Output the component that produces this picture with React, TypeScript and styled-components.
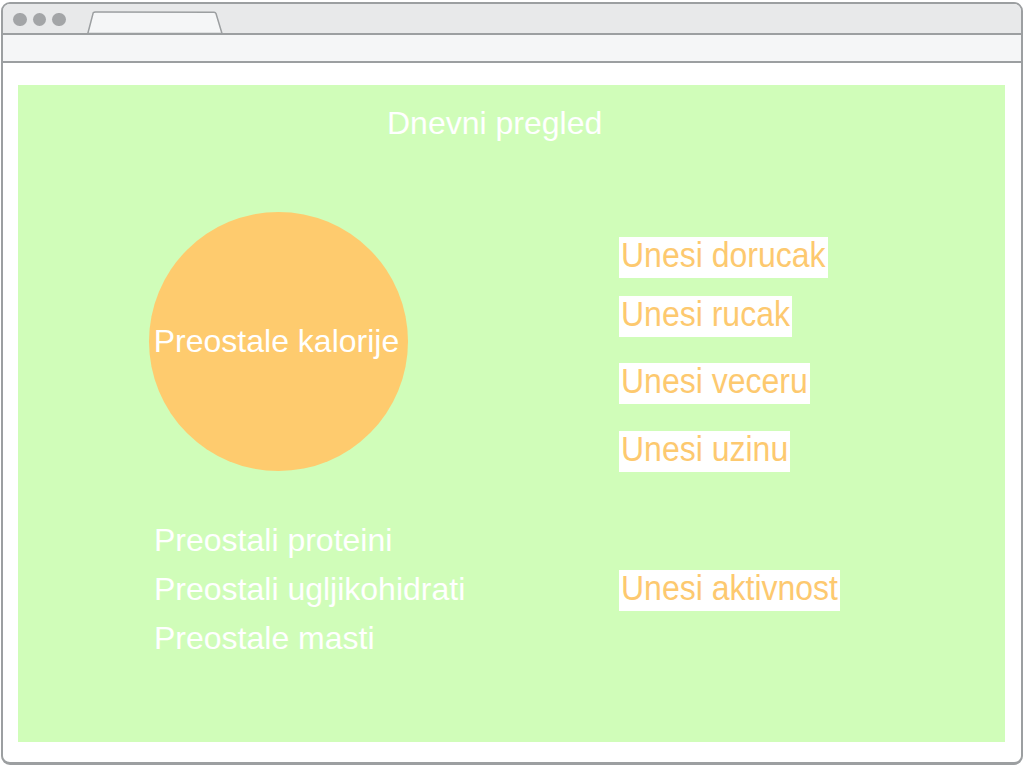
import React from "react";
import styled, { createGlobalStyle } from "styled-components";

const Global = createGlobalStyle`
  html, body { margin: 0; padding: 0; background: #ffffff; }
  body { font-family: "Liberation Sans", Arial, sans-serif; }
  * { box-sizing: border-box; }
`;

const GRAY = "#9c9fa1";
const ORANGE = "#fdc96f";

const Frame = styled.div`
  width: 1022px;
  height: 763px;
  margin: 2px 0 0 1px;
  border: 2px solid ${GRAY};
  border-bottom-width: 3px;
  border-radius: 9px;
  display: flex;
  flex-direction: column;
  overflow: hidden;
  background: #ffffff;
`;

const TitleBar = styled.div`
  height: 31px;
  flex: none;
  background: #e8e9ea;
  border-bottom: 2px solid ${GRAY};
  display: flex;
  align-items: flex-end;
  padding-left: 10px;
`;

const Dots = styled.div`
  display: flex;
  gap: 6px;
  align-self: center;
  margin-top: 2px;
`;

const Dot = styled.span`
  width: 13.5px;
  height: 13.5px;
  border-radius: 50%;
  background: #a3a5a7;
`;

const Tab = styled.svg`
  display: block;
  margin-left: 21px;
  margin-bottom: -1px;
`;

const AddressBar = styled.div`
  height: 28px;
  flex: none;
  background: #f5f6f7;
  border-bottom: 2px solid ${GRAY};
`;

const Content = styled.div`
  flex: 1;
  display: flex;
  padding: 22px 16px 20px 15px;
`;

const Panel = styled.div`
  flex: 1;
  background: #d0fdb9;
  padding-top: 18px;
  color: #ffffff;
  font-size: 32px;
`;

const Title = styled.h1`
  margin: 0 0 0 369px;
  font-size: 32px;
  font-weight: normal;
  line-height: 40px;
  color: #ffffff;
`;

const Main = styled.div`
  display: grid;
  grid-template-columns: 470px 1fr;
  padding-left: 131px;
  margin-top: 69px;
`;

const LeftCol = styled.div`
  display: flex;
  flex-direction: column;
`;

const Circle = styled.div`
  width: 259px;
  height: 259px;
  border-radius: 50%;
  background: #fecb6e;
  display: flex;
  align-items: center;
  justify-content: center;
  white-space: nowrap;
  line-height: 37px;
  padding: 0 4px 0 0;
`;

const Stats = styled.div`
  margin: 45px 0 0 5px;
  display: flex;
  flex-direction: column;
`;

const Stat = styled.div`
  line-height: 49px;
`;

const RightCol = styled.div`
  display: flex;
  flex-direction: column;
  align-items: flex-start;
  padding-top: 25px;
`;

const ActionButton = styled.button<{ $gap: number }>`
  margin-top: ${(p) => p.$gap}px;
  height: 41px;
  padding: 0 2px 3px;
  border: none;
  background: #ffffff;
  color: ${ORANGE};
  font-family: "Liberation Sans", Arial, sans-serif;
  font-size: 32px;
  white-space: nowrap;
  cursor: pointer;
  display: flex;
  align-items: flex-start;
`;

const ActionLabel = styled.span`
  display: inline-block;
  line-height: 38px;
  transform: scaleY(1.12);
  transform-origin: 50% 30px;
`;

const actions: { label: string; gap: number }[] = [
  { label: "Unesi dorucak", gap: 0 },
  { label: "Unesi rucak", gap: 18 },
  { label: "Unesi veceru", gap: 26 },
  { label: "Unesi uzinu", gap: 27 },
  { label: "Unesi aktivnost", gap: 98 },
];

export default function App() {
  return (
    <>
      <Global />
      <Frame>
        <TitleBar>
          <Dots>
            <Dot />
            <Dot />
            <Dot />
          </Dots>
          <Tab width="136" height="23" viewBox="0 0 136 23">
            <path
              d="M0.8 22.5 L6.2 1.8 Q7 1 8.5 1 L127 1.2 Q128.5 1.3 129 2.5 L135 22.5 Z"
              fill="#f5f6f7"
              stroke={GRAY}
              strokeWidth="1.5"
            />
          </Tab>
        </TitleBar>
        <AddressBar />
        <Content>
          <Panel>
            <Title>Dnevni pregled</Title>
            <Main>
              <LeftCol>
                <Circle>Preostale kalorije</Circle>
                <Stats>
                  <Stat>Preostali proteini</Stat>
                  <Stat>Preostali ugljikohidrati</Stat>
                  <Stat>Preostale masti</Stat>
                </Stats>
              </LeftCol>
              <RightCol>
                {actions.map((a) => (
                  <ActionButton key={a.label} $gap={a.gap}>
                    <ActionLabel>{a.label}</ActionLabel>
                  </ActionButton>
                ))}
              </RightCol>
            </Main>
          </Panel>
        </Content>
      </Frame>
    </>
  );
}
